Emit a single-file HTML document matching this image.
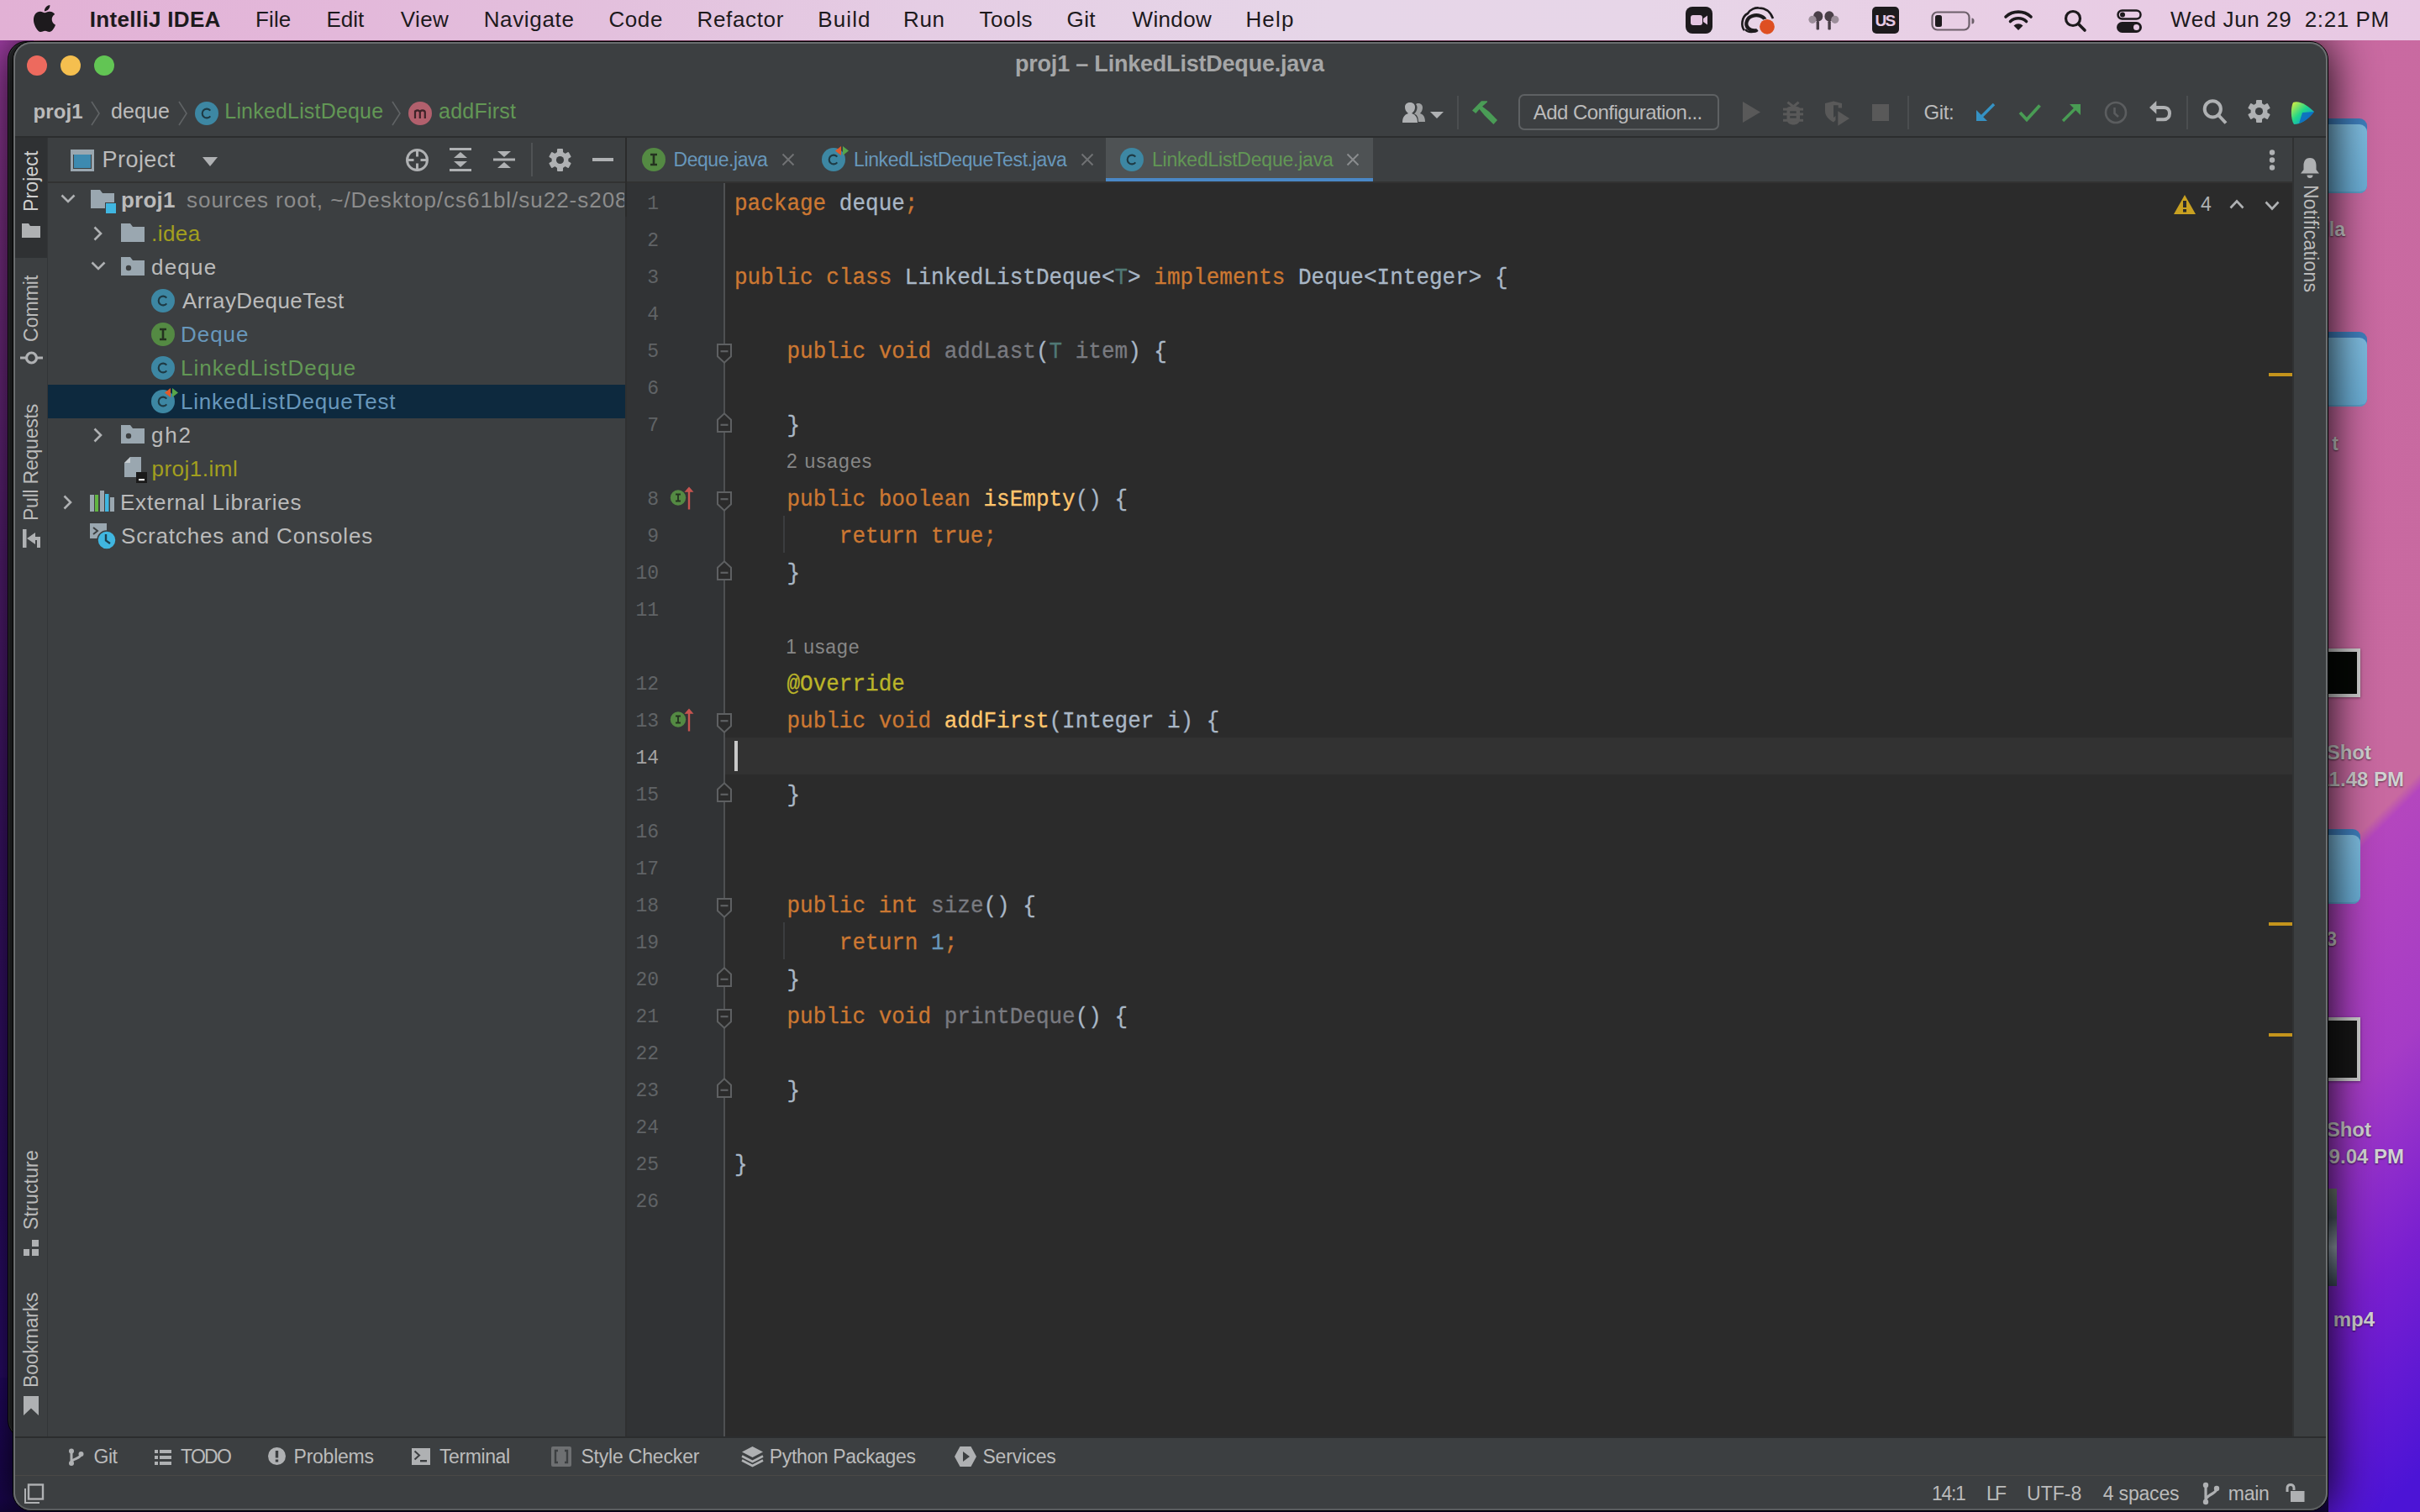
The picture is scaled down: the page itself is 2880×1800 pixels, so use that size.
<!DOCTYPE html>
<html><head><meta charset="utf-8">
<style>
*{margin:0;padding:0;box-sizing:border-box}
html,body{width:2880px;height:1800px;overflow:hidden;background:#5a1ad0}
body{position:relative;font-family:"Liberation Sans",sans-serif;color:#bbbbbb}
.a{position:absolute}
.t{position:absolute;white-space:pre;line-height:1}
svg{overflow:visible}
</style></head><body>
<div class="a" style="left:0;top:0;width:2880px;height:1800px;background:linear-gradient(135deg,#cc6ca4 0%,#c869a0 81.2%,#b446be 81.6%,#a63cc6 87.6%,#7a1fd0 93%,#4c14d6 99%)"></div>
<div class="a" style="left:0;top:48px;width:40px;height:1752px;background:linear-gradient(180deg,#a23fa6 0%,#83328d 12%,#5a2079 35%,#3e146e 55%,#2e0d6c 78%,#2a0b74 100%)"></div>
<div class="a" style="left:0;top:1640px;width:2771px;height:160px;background:linear-gradient(180deg,#26096c,#1a0650 90%,#14053c)"></div>
<div class="a" style="left:2760px;top:141px;width:57px;height:89px;border-radius:9px;background:#3f7fbd"></div>
<div class="a" style="left:2760px;top:148px;width:57px;height:82px;border-radius:9px;background:linear-gradient(180deg,#7fbde0,#6aaed6);box-shadow:inset 0 -8px 0 -6px #5b9fc8"></div>
<div class="a" style="left:2760px;top:395px;width:57px;height:89px;border-radius:9px;background:#3f7fbd"></div>
<div class="a" style="left:2760px;top:402px;width:57px;height:82px;border-radius:9px;background:linear-gradient(180deg,#7fbde0,#6aaed6);box-shadow:inset 0 -8px 0 -6px #5b9fc8"></div>
<div class="a" style="left:2740px;top:987px;width:69px;height:89px;border-radius:9px;background:#3f7fbd"></div>
<div class="a" style="left:2740px;top:994px;width:69px;height:82px;border-radius:9px;background:linear-gradient(180deg,#7fbde0,#6aaed6);box-shadow:inset 0 -8px 0 -6px #5b9fc8"></div>
<div class="a" style="left:2740px;top:772px;width:69px;height:58px;background:#d6d6d6;border:4px solid #cfcfcf;box-shadow:0 1px 3px rgba(0,0,0,.4)"><div style="width:100%;height:100%;background:#050805"></div></div>
<div class="a" style="left:2740px;top:1211px;width:69px;height:76px;background:#d6d6d6;border:4px solid #cfcfcf;box-shadow:0 1px 3px rgba(0,0,0,.4)"><div style="width:100%;height:100%;background:#161616"></div></div>
<div class="a" style="left:2740px;top:1415px;width:41px;height:116px;background:linear-gradient(180deg,#6f7a70,#4e5a66 30%,#9aa6b2 60%,#6a7888 80%,#3e4a5a)"></div>
<div class="t" style="left:2491px;top:262.1px;width:300px;text-align:right;font-size:23px;font-weight:700;color:#d2d2d2;text-shadow:0 1px 2px rgba(0,0,0,.6)">Umbrella</div>
<div class="t" style="left:2483px;top:517.0px;width:300px;text-align:right;font-size:23px;font-weight:700;color:#d2d2d2;text-shadow:0 1px 2px rgba(0,0,0,.6)">cs61bl  t</div>
<div class="t" style="left:2522px;top:883.6px;width:300px;text-align:right;font-size:24px;font-weight:700;color:#d2d2d2;text-shadow:0 1px 2px rgba(0,0,0,.6)">Screen Shot</div>
<div class="t" style="left:2561px;top:915.6px;width:300px;text-align:right;font-size:24px;font-weight:700;color:#d2d2d2;text-shadow:0 1px 2px rgba(0,0,0,.6)">2022-06-29 at 11.48 PM</div>
<div class="t" style="left:2481px;top:1106.5px;width:300px;text-align:right;font-size:23px;font-weight:700;color:#d2d2d2;text-shadow:0 1px 2px rgba(0,0,0,.6)">proj3</div>
<div class="t" style="left:2522px;top:1332.6px;width:300px;text-align:right;font-size:24px;font-weight:700;color:#d2d2d2;text-shadow:0 1px 2px rgba(0,0,0,.6)">Screen Shot</div>
<div class="t" style="left:2561px;top:1364.6px;width:300px;text-align:right;font-size:24px;font-weight:700;color:#d2d2d2;text-shadow:0 1px 2px rgba(0,0,0,.6)">2022-06-28 at 9.04 PM</div>
<div class="t" style="left:2526px;top:1558.6px;width:300px;text-align:right;font-size:24px;font-weight:700;color:#d2d2d2;text-shadow:0 1px 2px rgba(0,0,0,.6)">video mp4</div>
<div class="a" style="left:9px;top:49px;width:400px;height:1664px;border-radius:22px;background:#2c2e30;border:1px solid #050505;box-shadow:inset 1px 0 0 #4a4d4f"></div>
<div class="a" style="left:15px;top:49px;width:2756px;height:1750px;border-radius:22px;background:#3c3f41;border:1px solid #000;box-shadow:0 0 55px rgba(0,0,0,1)"></div>
<div class="a" style="left:0;top:0;width:2880px;height:48px;background:linear-gradient(90deg,#e2b1d5 0%,#e3b8da 14%,#e3c0dd 25%,#e5cde4 38%,#e6d6e8 55%,#e7d6e8 68%,#e8cfe5 80%,#e8c8e3 100%)"></div>
<div class="a" style="left:2006px;top:8px;width:32px;height:32px;background:#1d1a1d;border-radius:8px"></div>
<div class="a" style="left:2228px;top:8px;width:32px;height:32px;background:#1d1a1d;border-radius:5px"></div>
<div class="a" style="left:18px;top:162px;width:2750px;height:2px;background:#2b2d2e;"></div>
<div class="a" style="left:18px;top:164px;width:38px;height:1546px;background:#3c3f41;"></div>
<div class="a" style="left:18px;top:164px;width:38px;height:143px;background:#2f3133;"></div>
<div class="a" style="left:56px;top:164px;width:1px;height:1546px;background:#333537;"></div>
<div class="a" style="left:57px;top:216px;width:687px;height:2px;background:#323232;"></div>
<div class="a" style="left:57px;top:458px;width:687px;height:40px;background:#0d293e;"></div>
<div class="a" style="left:744px;top:164px;width:2px;height:54px;background:#2b2b2b;"></div>
<div class="a" style="left:744px;top:218px;width:2px;height:1492px;background:#2f3031;"></div>
<div class="a" style="left:1316px;top:164px;width:318px;height:52px;background:#4e5254;"></div>
<div class="a" style="left:1316px;top:212px;width:318px;height:4px;background:#4a88c7;"></div>
<div class="a" style="left:746px;top:216px;width:1982px;height:2px;background:#323232;"></div>
<div class="a" style="left:746px;top:218px;width:115px;height:1492px;background:#313335;"></div>
<div class="a" style="left:863px;top:218px;width:1865px;height:1492px;background:#2b2b2b;"></div>
<div class="a" style="left:863px;top:878px;width:1865px;height:44px;background:#323232;"></div>
<div class="a" style="left:861px;top:218px;width:2px;height:1492px;background:#4e5052;"></div>
<div class="a" style="left:2728px;top:164px;width:2px;height:1546px;background:#303233;"></div>
<div class="a" style="left:18px;top:1710px;width:2750px;height:2px;background:#2b2d2e;"></div>
<div class="a" style="left:18px;top:1756px;width:2750px;height:1px;background:#4a4946;"></div>
<div class="a" style="left:1734px;top:114px;width:2px;height:40px;background:#4b4e50;"></div>
<div class="a" style="left:1807px;top:112px;width:239px;height:43px;border:2px solid #5e6163;border-radius:7px"></div>
<div class="a" style="left:2228px;top:124px;width:20px;height:20px;background:#595959;"></div>
<div class="a" style="left:2270px;top:114px;width:2px;height:40px;background:#4b4e50;"></div>
<div class="a" style="left:2602px;top:114px;width:2px;height:40px;background:#4b4e50;"></div>
<div class="a" style="left:632px;top:170px;width:2px;height:40px;background:#505355;"></div>
<div class="a" style="left:705px;top:188px;width:25px;height:4px;background:#afb1b3;"></div>
<div class="a" style="left:744px;top:218px;width:2px;height:40px;background:#2b2b2b;"></div>
<div class="a" style="left:746px;top:218px;width:20px;height:40px;background:#313335;"></div>
<div class="t" style="left:698px;width:86px;text-align:right;top:232.3px;font-family:'Liberation Mono';font-size:23px;color:#606366">1</div>
<div class="t" style="left:698px;width:86px;text-align:right;top:276.3px;font-family:'Liberation Mono';font-size:23px;color:#606366">2</div>
<div class="t" style="left:698px;width:86px;text-align:right;top:320.3px;font-family:'Liberation Mono';font-size:23px;color:#606366">3</div>
<div class="t" style="left:698px;width:86px;text-align:right;top:364.3px;font-family:'Liberation Mono';font-size:23px;color:#606366">4</div>
<div class="t" style="left:698px;width:86px;text-align:right;top:408.3px;font-family:'Liberation Mono';font-size:23px;color:#606366">5</div>
<div class="t" style="left:698px;width:86px;text-align:right;top:452.3px;font-family:'Liberation Mono';font-size:23px;color:#606366">6</div>
<div class="t" style="left:698px;width:86px;text-align:right;top:496.3px;font-family:'Liberation Mono';font-size:23px;color:#606366">7</div>
<div class="t" style="left:698px;width:86px;text-align:right;top:584.3px;font-family:'Liberation Mono';font-size:23px;color:#606366">8</div>
<div class="t" style="left:698px;width:86px;text-align:right;top:628.3px;font-family:'Liberation Mono';font-size:23px;color:#606366">9</div>
<div class="t" style="left:698px;width:86px;text-align:right;top:672.3px;font-family:'Liberation Mono';font-size:23px;color:#606366">10</div>
<div class="t" style="left:698px;width:86px;text-align:right;top:716.3px;font-family:'Liberation Mono';font-size:23px;color:#606366">11</div>
<div class="t" style="left:698px;width:86px;text-align:right;top:804.3px;font-family:'Liberation Mono';font-size:23px;color:#606366">12</div>
<div class="t" style="left:698px;width:86px;text-align:right;top:848.3px;font-family:'Liberation Mono';font-size:23px;color:#606366">13</div>
<div class="t" style="left:698px;width:86px;text-align:right;top:892.3px;font-family:'Liberation Mono';font-size:23px;color:#a4a3a3">14</div>
<div class="t" style="left:698px;width:86px;text-align:right;top:936.3px;font-family:'Liberation Mono';font-size:23px;color:#606366">15</div>
<div class="t" style="left:698px;width:86px;text-align:right;top:980.3px;font-family:'Liberation Mono';font-size:23px;color:#606366">16</div>
<div class="t" style="left:698px;width:86px;text-align:right;top:1024.3px;font-family:'Liberation Mono';font-size:23px;color:#606366">17</div>
<div class="t" style="left:698px;width:86px;text-align:right;top:1068.3px;font-family:'Liberation Mono';font-size:23px;color:#606366">18</div>
<div class="t" style="left:698px;width:86px;text-align:right;top:1112.3px;font-family:'Liberation Mono';font-size:23px;color:#606366">19</div>
<div class="t" style="left:698px;width:86px;text-align:right;top:1156.3px;font-family:'Liberation Mono';font-size:23px;color:#606366">20</div>
<div class="t" style="left:698px;width:86px;text-align:right;top:1200.3px;font-family:'Liberation Mono';font-size:23px;color:#606366">21</div>
<div class="t" style="left:698px;width:86px;text-align:right;top:1244.3px;font-family:'Liberation Mono';font-size:23px;color:#606366">22</div>
<div class="t" style="left:698px;width:86px;text-align:right;top:1288.3px;font-family:'Liberation Mono';font-size:23px;color:#606366">23</div>
<div class="t" style="left:698px;width:86px;text-align:right;top:1332.3px;font-family:'Liberation Mono';font-size:23px;color:#606366">24</div>
<div class="t" style="left:698px;width:86px;text-align:right;top:1376.3px;font-family:'Liberation Mono';font-size:23px;color:#606366">25</div>
<div class="t" style="left:698px;width:86px;text-align:right;top:1420.3px;font-family:'Liberation Mono';font-size:23px;color:#606366">26</div>
<div class="t code" style="left:874px;top:230.0px;font-family:'Liberation Mono';font-size:26px;transform:scaleY(1.09);transform-origin:0 19.76px;-webkit-text-stroke:0.3px"><span style="color:#cc7832">package</span><span style="color:#a9b7c6"> deque</span><span style="color:#cc7832">;</span></div>
<div class="t code" style="left:874px;top:318.0px;font-family:'Liberation Mono';font-size:26px;transform:scaleY(1.09);transform-origin:0 19.76px;-webkit-text-stroke:0.3px"><span style="color:#cc7832">public</span><span style="color:#a9b7c6"> </span><span style="color:#cc7832">class</span><span style="color:#a9b7c6"> LinkedListDeque&lt;</span><span style="color:#507874">T</span><span style="color:#a9b7c6">&gt; </span><span style="color:#cc7832">implements</span><span style="color:#a9b7c6"> Deque&lt;Integer&gt; {</span></div>
<div class="t code" style="left:874px;top:406.0px;font-family:'Liberation Mono';font-size:26px;transform:scaleY(1.09);transform-origin:0 19.76px;-webkit-text-stroke:0.3px"><span style="color:#a9b7c6">    </span><span style="color:#cc7832">public</span><span style="color:#a9b7c6"> </span><span style="color:#cc7832">void</span><span style="color:#a9b7c6"> </span><span style="color:#797a80">addLast</span><span style="color:#a9b7c6">(</span><span style="color:#507874">T</span><span style="color:#a9b7c6"> </span><span style="color:#797a80">item</span><span style="color:#a9b7c6">) {</span></div>
<div class="t code" style="left:874px;top:494.0px;font-family:'Liberation Mono';font-size:26px;transform:scaleY(1.09);transform-origin:0 19.76px;-webkit-text-stroke:0.3px"><span style="color:#a9b7c6">    }</span></div>
<div class="t code" style="left:874px;top:582.0px;font-family:'Liberation Mono';font-size:26px;transform:scaleY(1.09);transform-origin:0 19.76px;-webkit-text-stroke:0.3px"><span style="color:#a9b7c6">    </span><span style="color:#cc7832">public</span><span style="color:#a9b7c6"> </span><span style="color:#cc7832">boolean</span><span style="color:#a9b7c6"> </span><span style="color:#ffc66d">isEmpty</span><span style="color:#a9b7c6">() {</span></div>
<div class="t code" style="left:874px;top:626.0px;font-family:'Liberation Mono';font-size:26px;transform:scaleY(1.09);transform-origin:0 19.76px;-webkit-text-stroke:0.3px"><span style="color:#a9b7c6">        </span><span style="color:#cc7832">return</span><span style="color:#a9b7c6"> </span><span style="color:#cc7832">true</span><span style="color:#cc7832">;</span></div>
<div class="t code" style="left:874px;top:670.0px;font-family:'Liberation Mono';font-size:26px;transform:scaleY(1.09);transform-origin:0 19.76px;-webkit-text-stroke:0.3px"><span style="color:#a9b7c6">    }</span></div>
<div class="t code" style="left:874px;top:802.0px;font-family:'Liberation Mono';font-size:26px;transform:scaleY(1.09);transform-origin:0 19.76px;-webkit-text-stroke:0.3px"><span style="color:#a9b7c6">    </span><span style="color:#bbb529">@Override</span></div>
<div class="t code" style="left:874px;top:846.0px;font-family:'Liberation Mono';font-size:26px;transform:scaleY(1.09);transform-origin:0 19.76px;-webkit-text-stroke:0.3px"><span style="color:#a9b7c6">    </span><span style="color:#cc7832">public</span><span style="color:#a9b7c6"> </span><span style="color:#cc7832">void</span><span style="color:#a9b7c6"> </span><span style="color:#ffc66d">addFirst</span><span style="color:#a9b7c6">(Integer i) {</span></div>
<div class="t code" style="left:874px;top:934.0px;font-family:'Liberation Mono';font-size:26px;transform:scaleY(1.09);transform-origin:0 19.76px;-webkit-text-stroke:0.3px"><span style="color:#a9b7c6">    }</span></div>
<div class="t code" style="left:874px;top:1066.0px;font-family:'Liberation Mono';font-size:26px;transform:scaleY(1.09);transform-origin:0 19.76px;-webkit-text-stroke:0.3px"><span style="color:#a9b7c6">    </span><span style="color:#cc7832">public</span><span style="color:#a9b7c6"> </span><span style="color:#cc7832">int</span><span style="color:#a9b7c6"> </span><span style="color:#797a80">size</span><span style="color:#a9b7c6">() {</span></div>
<div class="t code" style="left:874px;top:1110.0px;font-family:'Liberation Mono';font-size:26px;transform:scaleY(1.09);transform-origin:0 19.76px;-webkit-text-stroke:0.3px"><span style="color:#a9b7c6">        </span><span style="color:#cc7832">return</span><span style="color:#a9b7c6"> </span><span style="color:#6897bb">1</span><span style="color:#cc7832">;</span></div>
<div class="t code" style="left:874px;top:1154.0px;font-family:'Liberation Mono';font-size:26px;transform:scaleY(1.09);transform-origin:0 19.76px;-webkit-text-stroke:0.3px"><span style="color:#a9b7c6">    }</span></div>
<div class="t code" style="left:874px;top:1198.0px;font-family:'Liberation Mono';font-size:26px;transform:scaleY(1.09);transform-origin:0 19.76px;-webkit-text-stroke:0.3px"><span style="color:#a9b7c6">    </span><span style="color:#cc7832">public</span><span style="color:#a9b7c6"> </span><span style="color:#cc7832">void</span><span style="color:#a9b7c6"> </span><span style="color:#797a80">printDeque</span><span style="color:#a9b7c6">() {</span></div>
<div class="t code" style="left:874px;top:1286.0px;font-family:'Liberation Mono';font-size:26px;transform:scaleY(1.09);transform-origin:0 19.76px;-webkit-text-stroke:0.3px"><span style="color:#a9b7c6">    }</span></div>
<div class="t code" style="left:874px;top:1374.0px;font-family:'Liberation Mono';font-size:26px;transform:scaleY(1.09);transform-origin:0 19.76px;-webkit-text-stroke:0.3px"><span style="color:#a9b7c6">}</span></div>
<div class="a" style="left:932px;top:614px;width:2px;height:44px;background:#3b3d3f;"></div>
<div class="a" style="left:932px;top:1098px;width:2px;height:44px;background:#3b3d3f;"></div>
<div class="a" style="left:874px;top:882px;width:4px;height:36px;background:#c8c8c8;"></div>
<div class="a" style="left:2700px;top:444px;width:28px;height:4px;background:#c4941c;"></div>
<div class="a" style="left:2700px;top:1098px;width:28px;height:4px;background:#c4941c;"></div>
<div class="a" style="left:2700px;top:1230px;width:28px;height:4px;background:#c4941c;"></div>
<svg class="a" style="left:36.7px;top:6px;" width="32" height="32" viewBox="0 0 24 24"><path fill="#1d1a1d" d="M12.152 6.896c-.948 0-2.415-1.078-3.96-1.04-2.04.027-3.91 1.183-4.961 3.014-2.117 3.675-.546 9.103 1.519 12.09 1.013 1.454 2.208 3.09 3.792 3.039 1.52-.065 2.09-.987 3.935-.987 1.831 0 2.35.987 3.96.948 1.637-.026 2.676-1.48 3.676-2.948 1.156-1.688 1.636-3.325 1.662-3.415-.039-.013-3.182-1.221-3.22-4.857-.026-3.04 2.48-4.494 2.597-4.559-1.429-2.09-3.623-2.324-4.39-2.376-2-.156-3.675 1.09-4.61 1.09zM15.53 3.83c.843-1.012 1.4-2.427 1.245-3.83-1.207.052-2.662.805-3.532 1.818-.78.896-1.454 2.338-1.273 3.714 1.338.104 2.715-.688 3.559-1.701"/></svg>
<svg class="a" style="left:2006px;top:8px;" width="32" height="32" viewBox="0 0 32 32"><rect x="6" y="10" width="14" height="12" rx="3" fill="#e4c5e0"/><path d="M21 14 L26 10.5 V21.5 L21 18Z" fill="#e4c5e0"/></svg>
<svg class="a" style="left:2071px;top:8px;" width="44" height="36" viewBox="0 0 44 36"><path d="M5 28 C1 24 1 12 9 8 C12 3 18 1 22 1.5 C30 1.5 36 6 39 14" fill="none" stroke="#1d1a1d" stroke-width="2.6"/><path d="M20 28 C12 30 5 24 8 17 C10 11 18 9 24 11 C27 12 29 14 30 16" fill="none" stroke="#1d1a1d" stroke-width="4.2"/><path d="M6 27 C9 31 16 31 21 28" fill="none" stroke="#1d1a1d" stroke-width="2.4"/><circle cx="32" cy="23.8" r="9.5" fill="#e8dbe8"/><circle cx="32" cy="23.8" r="8.9" fill="#de4f22"/></svg>
<svg class="a" style="left:2152px;top:12px;" width="38" height="26" viewBox="0 0 38 26"><ellipse cx="11.7" cy="7.4" rx="5.6" ry="6.2" fill="#4a3f48"/><circle cx="5" cy="11.3" r="4.6" fill="#9c8e9a"/><rect x="9.6" y="13" width="3.4" height="10.5" rx="1.2" fill="#4a3f48"/><ellipse cx="25" cy="7.4" rx="5.6" ry="6.2" fill="#4a3f48"/><circle cx="31.8" cy="11.3" r="4.6" fill="#9c8e9a"/><rect x="23.4" y="13" width="3.4" height="10.5" rx="1.2" fill="#4a3f48"/></svg>
<svg class="a" style="left:2298px;top:13px;" width="52" height="24" viewBox="0 0 52 24"><rect x="1.5" y="1.5" width="44" height="21" rx="6" fill="none" stroke="#6c5f6a" stroke-width="2.2"/><rect x="5" y="5" width="8" height="14" rx="2.5" fill="#1d1a1d"/><path d="M48.5 8.5 a3 3.5 0 0 1 0 7z" fill="#6c5f6a"/></svg>
<svg class="a" style="left:2385px;top:10px;" width="34" height="28" viewBox="0 0 34 28"><path d="M2 10 A22 22 0 0 1 32 10" fill="none" stroke="#1d1a1d" stroke-width="3.6" stroke-linecap="round"/><path d="M7.5 15.5 A14 14 0 0 1 26.5 15.5" fill="none" stroke="#1d1a1d" stroke-width="3.6" stroke-linecap="round"/><path d="M17 26 L11.5 20.5 A8 8 0 0 1 22.5 20.5Z" fill="#1d1a1d"/></svg>
<svg class="a" style="left:2456px;top:11px;" width="28" height="28" viewBox="0 0 28 28"><circle cx="11" cy="11" r="8.5" fill="none" stroke="#1d1a1d" stroke-width="3.2"/><path d="M17.5 17.5 L25 25" stroke="#1d1a1d" stroke-width="3.6" stroke-linecap="round"/></svg>
<svg class="a" style="left:2519px;top:11px;" width="30" height="28" viewBox="0 0 30 28"><rect x="1.5" y="1.5" width="27" height="10" rx="5" fill="none" stroke="#1d1a1d" stroke-width="2.5"/><circle cx="7" cy="6.5" r="3" fill="#1d1a1d"/><rect x="0" y="15" width="30" height="13" rx="6.5" fill="#1d1a1d"/><circle cx="23.5" cy="21.5" r="3.5" fill="#e6c9e3"/></svg>
<svg class="a" style="left:32px;top:66px;" width="24" height="24" viewBox="0 0 24 24"><circle cx="12" cy="12" r="12" fill="#ed6a5e"/></svg>
<svg class="a" style="left:72px;top:66px;" width="24" height="24" viewBox="0 0 24 24"><circle cx="12" cy="12" r="12" fill="#f5bf4f"/></svg>
<svg class="a" style="left:112px;top:66px;" width="24" height="24" viewBox="0 0 24 24"><circle cx="12" cy="12" r="12" fill="#62c554"/></svg>
<svg class="a" style="left:108px;top:120px;" width="11" height="30" viewBox="0 0 11 30"><path d="M1 1 L10 15 L1 29" fill="none" stroke="#606365" stroke-width="1.6"/></svg>
<svg class="a" style="left:212px;top:120px;" width="11" height="30" viewBox="0 0 11 30"><path d="M1 1 L10 15 L1 29" fill="none" stroke="#606365" stroke-width="1.6"/></svg>
<svg class="a" style="left:465.5px;top:120px;" width="11" height="30" viewBox="0 0 11 30"><path d="M1 1 L10 15 L1 29" fill="none" stroke="#606365" stroke-width="1.6"/></svg>
<svg class="a" style="left:232px;top:120.5px;" width="28" height="28" viewBox="0 0 28 28"><circle cx="14" cy="14" r="14" fill="#3d87a3"/><path d="M18.3 10.6 A5.4 5.4 0 1 0 18.3 17.4" fill="none" stroke="#1e3a44" stroke-width="2.1"/></svg>
<svg class="a" style="left:486px;top:120.5px;" width="28" height="28" viewBox="0 0 28 28"><circle cx="14" cy="14" r="14" fill="#b2606d"/><path d="M8 20 V10.5 M8 13 C8 9.5 13.8 9.5 13.8 13 V20 M13.8 13 C13.8 9.5 19.8 9.5 19.8 13 V20" fill="none" stroke="#3e2328" stroke-width="2.2"/></svg>
<svg class="a" style="left:1667px;top:121px;" width="32" height="26" viewBox="0 0 32 26"><path d="M2 25 C2 17 6 15 9 14 C6 12 5 9 5 6.5 C5 2.5 8 1 11 1 C14 1 17 2.5 17 6.5 C17 9 16 12 13 14 C16 15 20 17 20 25Z" fill="#afb1b3"/><path d="M20 24 H29 C29 17 26 15 23 14 C25 12 26 9.5 26 7 C26 3.5 23.5 2 21 2 C19.5 2 18.5 2.5 18 3 C19 4.5 19.5 5.5 19.5 7 C19.5 10 18 13 16 14.5 C19 15.5 21 18 21 24Z" fill="#afb1b3" opacity=".85"/></svg>
<svg class="a" style="left:1702px;top:133px;" width="16" height="8" viewBox="0 0 16 8"><path d="M0 0 H16 L8 8Z" fill="#afb1b3"/></svg>
<svg class="a" style="left:1751px;top:120px;" width="32" height="29" viewBox="0 0 32 29"><path d="M1 11.4 L12 0.2 H19 V1.6 L13.1 6.8 L21.2 13.1 L31 23 L26.4 27.9 L16 17.8 L9.6 10 L5.3 14.9Z" fill="#4a9c56"/></svg>
<svg class="a" style="left:2074px;top:121px;" width="21" height="25" viewBox="0 0 21 25"><path d="M0 0 L21 12.5 L0 25Z" fill="#595959"/></svg>
<svg class="a" style="left:2121px;top:119px;" width="26" height="30" viewBox="0 0 26 30"><path d="M6.4 2.6 L13.3 8 L19.6 2.6" fill="none" stroke="#595959" stroke-width="3"/><path d="M5.5 10 C5.5 6.5 21 6.5 21 10 V23 C21 27.5 17 29.5 13.3 29.5 C9.5 29.5 5.5 27.5 5.5 23Z" fill="#595959"/><rect x="1" y="9.6" width="24" height="3" fill="#595959"/><rect x="1" y="15.4" width="24" height="3" fill="#595959"/><rect x="1" y="22.8" width="24" height="3" fill="#595959"/><rect x="9.2" y="13.3" width="7.5" height="2.5" fill="#3c3f41"/><rect x="9.2" y="19.1" width="7.5" height="2.5" fill="#3c3f41"/></svg>
<svg class="a" style="left:2172px;top:118px;" width="30" height="32" viewBox="0 0 30 32"><path d="M0 5 L10 2.5 L20 5 V10.5 H15.7 V7.3 H10 V22 L12.5 20 V25 L10 27.5 C4 24 0 20 0 14Z" fill="#595959"/><path d="M15.3 14.3 L29 23 L15.3 31.7Z" fill="#595959"/></svg>
<svg class="a" style="left:2351px;top:123px;" width="23" height="22" viewBox="0 0 23 22"><path d="M22 1 L6 17" stroke="#3592c4" stroke-width="3.4"/><path d="M1 8 V21 H14Z" fill="#3592c4"/></svg>
<svg class="a" style="left:2402px;top:123px;" width="27" height="22" viewBox="0 0 27 22"><path d="M2 11 L10 19.5 L25.5 2.5" fill="none" stroke="#499c54" stroke-width="3.8"/></svg>
<svg class="a" style="left:2454px;top:123px;" width="23" height="22" viewBox="0 0 23 22"><path d="M1 21 L17 5" stroke="#499c54" stroke-width="3.4"/><path d="M22 1 V14 L9 1Z" fill="#499c54"/></svg>
<svg class="a" style="left:2504px;top:120px;" width="28" height="28" viewBox="0 0 28 28"><circle cx="14" cy="14" r="12" fill="none" stroke="#5b5d5f" stroke-width="2.6"/><path d="M12.5 8 V15 L17 19" fill="none" stroke="#5b5d5f" stroke-width="2.6"/></svg>
<svg class="a" style="left:2558px;top:120px;" width="27" height="27" viewBox="0 0 27 27"><path d="M0 8 L8.3 0 V15.8Z" fill="#afb1b3"/><path d="M7 7.9 H17 C22 7.9 24 11.2 24 15 C24 19 21.5 22.2 17 22.2 H8.2" fill="none" stroke="#afb1b3" stroke-width="4"/></svg>
<svg class="a" style="left:2621px;top:120px;" width="30" height="29" viewBox="0 0 30 29"><circle cx="12.3" cy="9.8" r="9.6" fill="none" stroke="#afb1b3" stroke-width="4"/><path d="M19.5 17.5 L28 26.5" stroke="#afb1b3" stroke-width="4"/></svg>
<svg class="a" style="left:2675px;top:119px;" width="27" height="27" viewBox="0 0 27 27"><g transform="translate(13.5,13.5) scale(1.0384615384615385)"><rect x="-3.4" y="-13" width="6.8" height="7" rx="1" transform="rotate(0)" fill="#afb1b3"/><rect x="-3.4" y="-13" width="6.8" height="7" rx="1" transform="rotate(60)" fill="#afb1b3"/><rect x="-3.4" y="-13" width="6.8" height="7" rx="1" transform="rotate(120)" fill="#afb1b3"/><rect x="-3.4" y="-13" width="6.8" height="7" rx="1" transform="rotate(180)" fill="#afb1b3"/><rect x="-3.4" y="-13" width="6.8" height="7" rx="1" transform="rotate(240)" fill="#afb1b3"/><rect x="-3.4" y="-13" width="6.8" height="7" rx="1" transform="rotate(300)" fill="#afb1b3"/><circle r="9.6" fill="#afb1b3"/><circle r="4.4" fill="#3c3f41"/></g></svg>
<svg class="a" style="left:2726px;top:120px;" width="29" height="29" viewBox="0 0 29 29"><defs><linearGradient id="cwm" x1="0" y1="0" x2="1" y2="1"><stop offset="0" stop-color="#e6ef3c"/><stop offset=".45" stop-color="#21d789"/><stop offset="1" stop-color="#087cfa"/></linearGradient></defs><path d="M3 2 C10 -1 20 5 28 13 C21 22 12 28 4 28 C0 22 0 8 3 2Z" fill="url(#cwm)"/><path d="M14 14 L28 13 C24 19 18 24 10 27Z" fill="#0b62c4" opacity=".8"/></svg>
<svg class="a" style="left:26px;top:266px;" width="22" height="17" viewBox="0 0 22 17"><path d="M0 0 H8 L10 3 H22 V17 H0Z" fill="#afb1b3"/></svg>
<svg class="a" style="left:24px;top:417px;" width="27" height="18" viewBox="0 0 27 18"><circle cx="13.5" cy="9" r="6" fill="none" stroke="#afb1b3" stroke-width="3.2"/><path d="M0 9 H7.5 M19.5 9 H27" stroke="#afb1b3" stroke-width="3.2"/></svg>
<svg class="a" style="left:27px;top:630px;" width="22" height="22" viewBox="0 0 22 22"><rect x="0" y="0" width="4.5" height="22" fill="#afb1b3"/><path d="M5 11 L15 4 V18Z" fill="#afb1b3"/><path d="M13 9 H21 V22 H17 V13 H13Z" fill="#afb1b3"/></svg>
<svg class="a" style="left:28px;top:1476px;" width="18" height="19" viewBox="0 0 18 19"><rect x="0" y="11" width="7" height="8" fill="#afb1b3"/><rect x="10" y="0" width="8" height="8" fill="#afb1b3"/><rect x="10" y="11" width="8" height="8" fill="#afb1b3"/></svg>
<svg class="a" style="left:28px;top:1662px;" width="18" height="23" viewBox="0 0 18 23"><path d="M0 0 H18 V23 L9 14.5 L0 23Z" fill="#afb1b3"/></svg>
<svg class="a" style="left:84px;top:178px;" width="28" height="26" viewBox="0 0 28 26"><rect x="1.5" y="1.5" width="25" height="23" fill="none" stroke="#9aa7b0" stroke-width="3"/><rect x="4" y="6" width="20" height="16" fill="#3d8ab0"/><rect x="3" y="3" width="22" height="3" fill="#9aa7b0"/></svg>
<svg class="a" style="left:241px;top:187px;" width="18" height="11" viewBox="0 0 18 11"><path d="M0 0 H18 L9 11Z" fill="#afb1b3"/></svg>
<svg class="a" style="left:482px;top:176px;" width="29" height="29" viewBox="0 0 29 29"><circle cx="14.5" cy="14.5" r="12" fill="none" stroke="#afb1b3" stroke-width="3"/><path d="M14.5 2 V10.5 M14.5 18.5 V27 M2 14.5 H10.5 M18.5 14.5 H27" stroke="#afb1b3" stroke-width="3"/></svg>
<svg class="a" style="left:535px;top:176px;" width="26" height="28" viewBox="0 0 26 28"><path d="M0 1.5 H26 M0 26.5 H26" stroke="#afb1b3" stroke-width="3"/><path d="M13 5 L21 12 H5Z M13 23 L21 16 H5Z" fill="#afb1b3"/></svg>
<svg class="a" style="left:587px;top:176px;" width="26" height="28" viewBox="0 0 26 28"><path d="M0 14 H26" stroke="#afb1b3" stroke-width="3"/><path d="M13 11 L21 4 H5Z M13 17 L21 24 H5Z" fill="#afb1b3"/></svg>
<svg class="a" style="left:653px;top:177px;" width="27" height="27" viewBox="0 0 27 27"><g transform="translate(13.5,13.5) scale(1.0384615384615385)"><rect x="-3.4" y="-13" width="6.8" height="7" rx="1" transform="rotate(0)" fill="#afb1b3"/><rect x="-3.4" y="-13" width="6.8" height="7" rx="1" transform="rotate(60)" fill="#afb1b3"/><rect x="-3.4" y="-13" width="6.8" height="7" rx="1" transform="rotate(120)" fill="#afb1b3"/><rect x="-3.4" y="-13" width="6.8" height="7" rx="1" transform="rotate(180)" fill="#afb1b3"/><rect x="-3.4" y="-13" width="6.8" height="7" rx="1" transform="rotate(240)" fill="#afb1b3"/><rect x="-3.4" y="-13" width="6.8" height="7" rx="1" transform="rotate(300)" fill="#afb1b3"/><circle r="9.6" fill="#afb1b3"/><circle r="4.4" fill="#3c3f41"/></g></svg>
<svg class="a" style="left:72px;top:231px;" width="18" height="11" viewBox="0 0 18 11"><path d="M1.5 1.5 L9 9 L16.5 1.5" fill="none" stroke="#afb1b3" stroke-width="2.6"/></svg>
<svg class="a" style="left:108px;top:226px;" width="31" height="29" viewBox="0 0 31 29"><path d="M0 0 H11 L14 4 H28 V22 H0Z" fill="#9aa7b0"/><rect x="17" y="15" width="13" height="13" fill="#3c3f41"/><rect x="18" y="16" width="12" height="12" fill="#40b6e0"/></svg>
<svg class="a" style="left:111px;top:269px;" width="11" height="18" viewBox="0 0 11 18"><path d="M1.5 1.5 L9 9 L1.5 16.5" fill="none" stroke="#afb1b3" stroke-width="2.6"/></svg>
<svg class="a" style="left:144px;top:266px;" width="28" height="22" viewBox="0 0 28 22"><path d="M0 0 H11 L14 4 H28 V22 H0Z" fill="#9aa7b0"/></svg>
<svg class="a" style="left:108px;top:311px;" width="18" height="11" viewBox="0 0 18 11"><path d="M1.5 1.5 L9 9 L16.5 1.5" fill="none" stroke="#afb1b3" stroke-width="2.6"/></svg>
<svg class="a" style="left:144px;top:306px;" width="28" height="22" viewBox="0 0 28 22"><path d="M0 0 H11 L14 4 H28 V22 H0Z" fill="#9aa7b0"/><circle cx="9" cy="13" r="3.2" fill="#3c3f41"/></svg>
<svg class="a" style="left:180px;top:344px;" width="28" height="28" viewBox="0 0 28 28"><circle cx="14" cy="14" r="14" fill="#3d87a3"/><path d="M18.3 10.6 A5.4 5.4 0 1 0 18.3 17.4" fill="none" stroke="#1e3a44" stroke-width="2.1"/></svg>
<svg class="a" style="left:180px;top:384px;" width="28" height="28" viewBox="0 0 28 28"><circle cx="14" cy="14" r="14" fill="#548a43"/><path d="M10 8 H18 M10 20 H18 M14 8 V20" stroke="#243220" stroke-width="2.6"/></svg>
<svg class="a" style="left:180px;top:424px;" width="28" height="28" viewBox="0 0 28 28"><circle cx="14" cy="14" r="14" fill="#3d87a3"/><path d="M18.3 10.6 A5.4 5.4 0 1 0 18.3 17.4" fill="none" stroke="#1e3a44" stroke-width="2.1"/></svg>
<svg class="a" style="left:180px;top:464px;" width="28" height="28" viewBox="0 0 28 28"><circle cx="14" cy="14" r="14" fill="#3d87a3"/><path d="M18.3 10.6 A5.4 5.4 0 1 0 18.3 17.4" fill="none" stroke="#1e3a44" stroke-width="2.1"/></svg>
<svg class="a" style="left:196px;top:462px;" width="16" height="12" viewBox="0 0 16 12"><path d="M7 0 V11 L0 5.5Z" fill="#e0592a"/><path d="M9 0 V11 L16 5.5Z" fill="#57a64a"/></svg>
<svg class="a" style="left:111px;top:509px;" width="11" height="18" viewBox="0 0 11 18"><path d="M1.5 1.5 L9 9 L1.5 16.5" fill="none" stroke="#afb1b3" stroke-width="2.6"/></svg>
<svg class="a" style="left:144px;top:506px;" width="28" height="22" viewBox="0 0 28 22"><path d="M0 0 H11 L14 4 H28 V22 H0Z" fill="#9aa7b0"/><circle cx="9" cy="13" r="3.2" fill="#3c3f41"/></svg>
<svg class="a" style="left:148px;top:544px;" width="28" height="31" viewBox="0 0 28 31"><path d="M7 0 H20 V24 H0 V7Z" fill="#9aa7b0"/><path d="M0 7 H7 V0Z" fill="#3c3f41"/><path d="M0 7 L7 0 V7Z" fill="#c7cdd1"/><rect x="14" y="18" width="13" height="13" fill="#1a1a1a"/><rect x="17" y="26" width="7" height="2.2" fill="#e8e8e8"/></svg>
<svg class="a" style="left:75px;top:589px;" width="11" height="18" viewBox="0 0 11 18"><path d="M1.5 1.5 L9 9 L1.5 16.5" fill="none" stroke="#afb1b3" stroke-width="2.6"/></svg>
<svg class="a" style="left:107px;top:584px;" width="29" height="25" viewBox="0 0 29 25"><rect x="0" y="5" width="5" height="20" fill="#9aa7b0"/><rect x="6" y="5" width="4" height="20" fill="#62b543"/><rect x="12" y="0" width="5" height="25" fill="#9aa7b0"/><rect x="18" y="4" width="4.5" height="21" fill="#40b6e0"/><rect x="24" y="8" width="5" height="17" fill="#9aa7b0"/></svg>
<svg class="a" style="left:107px;top:623px;" width="32" height="32" viewBox="0 0 32 32"><rect x="0" y="0" width="20" height="18" fill="#9aa7b0"/><path d="M4 5 L9 9 L4 13" fill="none" stroke="#3c3f41" stroke-width="2"/><circle cx="20" cy="20" r="11" fill="#40b6e0" stroke="#3c3f41" stroke-width="1.5"/><path d="M19 13 V20.5 L24 24" fill="none" stroke="#1c3f4f" stroke-width="2.4"/></svg>
<svg class="a" style="left:764px;top:176px;" width="28" height="28" viewBox="0 0 28 28"><circle cx="14" cy="14" r="14" fill="#548a43"/><path d="M10 8 H18 M10 20 H18 M14 8 V20" stroke="#243220" stroke-width="2.6"/></svg>
<svg class="a" style="left:930px;top:182px;" width="16" height="16" viewBox="0 0 16 16"><path d="M1.5 1.5 L14.5 14.5 M14.5 1.5 L1.5 14.5" stroke="#707274" stroke-width="2"/></svg>
<svg class="a" style="left:978px;top:176px;" width="28" height="28" viewBox="0 0 28 28"><circle cx="14" cy="14" r="14" fill="#3d87a3"/><path d="M18.3 10.6 A5.4 5.4 0 1 0 18.3 17.4" fill="none" stroke="#1e3a44" stroke-width="2.1"/></svg>
<svg class="a" style="left:994px;top:174px;" width="16" height="12" viewBox="0 0 16 12"><path d="M7 0 V11 L0 5.5Z" fill="#e0592a"/><path d="M9 0 V11 L16 5.5Z" fill="#57a64a"/></svg>
<svg class="a" style="left:1286px;top:182px;" width="16" height="16" viewBox="0 0 16 16"><path d="M1.5 1.5 L14.5 14.5 M14.5 1.5 L1.5 14.5" stroke="#707274" stroke-width="2"/></svg>
<svg class="a" style="left:1333px;top:176px;" width="28" height="28" viewBox="0 0 28 28"><circle cx="14" cy="14" r="14" fill="#3d87a3"/><path d="M18.3 10.6 A5.4 5.4 0 1 0 18.3 17.4" fill="none" stroke="#1e3a44" stroke-width="2.1"/></svg>
<svg class="a" style="left:1602px;top:182px;" width="16" height="16" viewBox="0 0 16 16"><path d="M1.5 1.5 L14.5 14.5 M14.5 1.5 L1.5 14.5" stroke="#8a8c8e" stroke-width="2"/></svg>
<svg class="a" style="left:2700px;top:178px;" width="8" height="24" viewBox="0 0 8 24"><circle cx="4" cy="3.5" r="3.2" fill="#afb1b3"/><circle cx="4" cy="12.5" r="3.2" fill="#afb1b3"/><circle cx="4" cy="21.5" r="3.2" fill="#afb1b3"/></svg>
<svg class="a" style="left:853px;top:409px;" width="18" height="24" viewBox="0 0 18 24"><path d="M1 1 H17 V15.3 L9 22.7 L1 15.3Z" fill="#2b2b2b" stroke="#5e6062" stroke-width="2"/><path d="M4.5 9.2 H13.5" stroke="#5e6062" stroke-width="2.2"/></svg>
<svg class="a" style="left:853px;top:585px;" width="18" height="24" viewBox="0 0 18 24"><path d="M1 1 H17 V15.3 L9 22.7 L1 15.3Z" fill="#2b2b2b" stroke="#5e6062" stroke-width="2"/><path d="M4.5 9.2 H13.5" stroke="#5e6062" stroke-width="2.2"/></svg>
<svg class="a" style="left:853px;top:849px;" width="18" height="24" viewBox="0 0 18 24"><path d="M1 1 H17 V15.3 L9 22.7 L1 15.3Z" fill="#2b2b2b" stroke="#5e6062" stroke-width="2"/><path d="M4.5 9.2 H13.5" stroke="#5e6062" stroke-width="2.2"/></svg>
<svg class="a" style="left:853px;top:1069px;" width="18" height="24" viewBox="0 0 18 24"><path d="M1 1 H17 V15.3 L9 22.7 L1 15.3Z" fill="#2b2b2b" stroke="#5e6062" stroke-width="2"/><path d="M4.5 9.2 H13.5" stroke="#5e6062" stroke-width="2.2"/></svg>
<svg class="a" style="left:853px;top:1201px;" width="18" height="24" viewBox="0 0 18 24"><path d="M1 1 H17 V15.3 L9 22.7 L1 15.3Z" fill="#2b2b2b" stroke="#5e6062" stroke-width="2"/><path d="M4.5 9.2 H13.5" stroke="#5e6062" stroke-width="2.2"/></svg>
<svg class="a" style="left:853px;top:491px;" width="18" height="24" viewBox="0 0 18 24"><path d="M1 23 H17 V8.7 L9 1.3 L1 8.7Z" fill="#2b2b2b" stroke="#5e6062" stroke-width="2"/><path d="M4.5 14.8 H13.5" stroke="#5e6062" stroke-width="2.2"/></svg>
<svg class="a" style="left:853px;top:667px;" width="18" height="24" viewBox="0 0 18 24"><path d="M1 23 H17 V8.7 L9 1.3 L1 8.7Z" fill="#2b2b2b" stroke="#5e6062" stroke-width="2"/><path d="M4.5 14.8 H13.5" stroke="#5e6062" stroke-width="2.2"/></svg>
<svg class="a" style="left:853px;top:931px;" width="18" height="24" viewBox="0 0 18 24"><path d="M1 23 H17 V8.7 L9 1.3 L1 8.7Z" fill="#2b2b2b" stroke="#5e6062" stroke-width="2"/><path d="M4.5 14.8 H13.5" stroke="#5e6062" stroke-width="2.2"/></svg>
<svg class="a" style="left:853px;top:1151px;" width="18" height="24" viewBox="0 0 18 24"><path d="M1 23 H17 V8.7 L9 1.3 L1 8.7Z" fill="#2b2b2b" stroke="#5e6062" stroke-width="2"/><path d="M4.5 14.8 H13.5" stroke="#5e6062" stroke-width="2.2"/></svg>
<svg class="a" style="left:853px;top:1283px;" width="18" height="24" viewBox="0 0 18 24"><path d="M1 23 H17 V8.7 L9 1.3 L1 8.7Z" fill="#2b2b2b" stroke="#5e6062" stroke-width="2"/><path d="M4.5 14.8 H13.5" stroke="#5e6062" stroke-width="2.2"/></svg>
<svg class="a" style="left:797px;top:578px;" width="30" height="30" viewBox="0 0 30 30"><circle cx="10" cy="14.5" r="9.2" fill="#548a43"/><path d="M7 10.5 H13 M7 18.5 H13 M10 10.5 V18.5" stroke="#243220" stroke-width="1.8"/><path d="M23 1.5 L28.5 7.8 H24.2 V28.5 H21.8 V7.8 H17.5Z" fill="#c75450"/></svg>
<svg class="a" style="left:797px;top:842px;" width="30" height="30" viewBox="0 0 30 30"><circle cx="10" cy="14.5" r="9.2" fill="#548a43"/><path d="M7 10.5 H13 M7 18.5 H13 M10 10.5 V18.5" stroke="#243220" stroke-width="1.8"/><path d="M23 1.5 L28.5 7.8 H24.2 V28.5 H21.8 V7.8 H17.5Z" fill="#c75450"/></svg>
<svg class="a" style="left:2587px;top:232px;" width="26" height="23" viewBox="0 0 26 23"><path d="M13 0 L26 23 H0Z" fill="#c9a121"/><rect x="11" y="7" width="4" height="8" fill="#2b2b2b"/><rect x="11" y="17" width="4" height="3.5" fill="#2b2b2b"/></svg>
<svg class="a" style="left:2653px;top:237px;" width="18" height="12" viewBox="0 0 18 12"><path d="M1.5 10.5 L9 2.5 L16.5 10.5" fill="none" stroke="#afb1b3" stroke-width="2.6"/></svg>
<svg class="a" style="left:2695px;top:239px;" width="18" height="12" viewBox="0 0 18 12"><path d="M1.5 1.5 L9 9.5 L16.5 1.5" fill="none" stroke="#afb1b3" stroke-width="2.6"/></svg>
<svg class="a" style="left:2737px;top:187px;" width="24" height="26" viewBox="0 0 24 26"><path d="M12 1 C6 1 4.5 6 4.5 10 V15 L1 19.5 H23 L19.5 15 V10 C19.5 6 18 1 12 1Z" fill="#afb1b3"/><path d="M8.5 21.5 H15.5 C15.5 24 14 25 12 25 C10 25 8.5 24 8.5 21.5Z" fill="#afb1b3"/></svg>
<svg class="a" style="left:81px;top:1724px;" width="19" height="21" viewBox="0 0 19 21"><circle cx="4" cy="3.5" r="3" fill="#afb1b3"/><circle cx="4" cy="18" r="3" fill="#afb1b3"/><circle cx="15.5" cy="7" r="3" fill="#afb1b3"/><path d="M4 4 V18 M15.5 7 C15.5 13 4 12 4 17" fill="none" stroke="#afb1b3" stroke-width="3"/></svg>
<svg class="a" style="left:184px;top:1726px;" width="20" height="18" viewBox="0 0 20 18"><rect x="0" y="0" width="4" height="4" fill="#afb1b3"/><rect x="6" y="0" width="14" height="4" fill="#afb1b3"/><rect x="0" y="7" width="4" height="4" fill="#afb1b3"/><rect x="6" y="7" width="14" height="4" fill="#afb1b3"/><rect x="0" y="14" width="4" height="4" fill="#afb1b3"/><rect x="6" y="14" width="14" height="4" fill="#afb1b3"/></svg>
<svg class="a" style="left:319px;top:1723px;" width="21" height="21" viewBox="0 0 21 21"><circle cx="10.5" cy="10.5" r="10.5" fill="#afb1b3"/><rect x="8.8" y="4" width="3.4" height="8.5" fill="#3c3f41"/><rect x="8.8" y="14.5" width="3.4" height="3" fill="#3c3f41"/></svg>
<svg class="a" style="left:490px;top:1724px;" width="22" height="20" viewBox="0 0 22 20"><rect x="0" y="0" width="22" height="20" fill="#afb1b3"/><path d="M3.5 3.5 L9 8.5 L3.5 13.5" fill="none" stroke="#3c3f41" stroke-width="2"/><rect x="10" y="14" width="8" height="2.4" fill="#3c3f41"/></svg>
<svg class="a" style="left:656px;top:1722px;" width="24" height="24" viewBox="0 0 24 24"><rect x="0" y="0" width="24" height="24" rx="2" fill="#6e7072"/><path d="M8 5 H5 V19 H8 M16 5 H19 V19 H16" fill="none" stroke="#3c3f41" stroke-width="2.4"/></svg>
<svg class="a" style="left:883px;top:1722px;" width="25" height="24" viewBox="0 0 25 24"><path d="M12.5 0 L25 6.5 L12.5 13 L0 6.5Z" fill="#afb1b3"/><path d="M0 11.5 L12.5 18 L25 11.5 M0 16.5 L12.5 23 L25 16.5" fill="none" stroke="#afb1b3" stroke-width="2.6"/></svg>
<svg class="a" style="left:1136px;top:1722px;" width="26" height="24" viewBox="0 0 26 24"><path d="M6.5 0 H19.5 L26 12 L19.5 24 H6.5 L0 12Z" fill="#afb1b3"/><path d="M10 6 L18 12 L10 18Z" fill="#3c3f41"/></svg>
<svg class="a" style="left:28px;top:1766px;" width="25" height="25" viewBox="0 0 25 25"><path d="M2 6 V23 H19" fill="none" stroke="#afb1b3" stroke-width="2"/><rect x="6" y="1.5" width="17" height="17" fill="none" stroke="#afb1b3" stroke-width="2.4"/></svg>
<svg class="a" style="left:2621px;top:1764px;" width="21" height="28" viewBox="0 0 21 28"><circle cx="4" cy="4" r="3.2" fill="#afb1b3"/><circle cx="4" cy="24" r="3.2" fill="#afb1b3"/><circle cx="17" cy="8" r="3.2" fill="#afb1b3"/><path d="M4 4 V24 M17 8 C17 15 4 15 4 22" fill="none" stroke="#afb1b3" stroke-width="3.2"/></svg>
<svg class="a" style="left:2719px;top:1765px;" width="24" height="23" viewBox="0 0 24 23"><path d="M3 11 V6.5 C3 1 11 1 11 6.5 V9" fill="none" stroke="#afb1b3" stroke-width="3"/><rect x="7" y="10" width="16.5" height="13" fill="#afb1b3"/></svg>
<div class="t" style="left:106.8px;top:9.7px;font-family:'Liberation Sans';font-size:26px;font-weight:700;color:#1d1a1d;letter-spacing:0.32px;">IntelliJ IDEA</div>
<div class="t" style="left:304.0px;top:9.7px;font-family:'Liberation Sans';font-size:26px;font-weight:400;color:#1d1a1d;letter-spacing:0.12px;">File</div>
<div class="t" style="left:388.5px;top:9.7px;font-family:'Liberation Sans';font-size:26px;font-weight:400;color:#1d1a1d;letter-spacing:-0.03px;">Edit</div>
<div class="t" style="left:476.8px;top:9.7px;font-family:'Liberation Sans';font-size:26px;font-weight:400;color:#1d1a1d;letter-spacing:0.36px;">View</div>
<div class="t" style="left:575.7px;top:9.7px;font-family:'Liberation Sans';font-size:26px;font-weight:400;color:#1d1a1d;letter-spacing:0.65px;">Navigate</div>
<div class="t" style="left:724.4px;top:9.7px;font-family:'Liberation Sans';font-size:26px;font-weight:400;color:#1d1a1d;letter-spacing:0.60px;">Code</div>
<div class="t" style="left:829.5px;top:9.7px;font-family:'Liberation Sans';font-size:26px;font-weight:400;color:#1d1a1d;letter-spacing:0.66px;">Refactor</div>
<div class="t" style="left:973.3px;top:9.7px;font-family:'Liberation Sans';font-size:26px;font-weight:400;color:#1d1a1d;letter-spacing:1.09px;">Build</div>
<div class="t" style="left:1075.0px;top:9.7px;font-family:'Liberation Sans';font-size:26px;font-weight:400;color:#1d1a1d;letter-spacing:0.68px;">Run</div>
<div class="t" style="left:1165.5px;top:9.7px;font-family:'Liberation Sans';font-size:26px;font-weight:400;color:#1d1a1d;letter-spacing:0.58px;">Tools</div>
<div class="t" style="left:1269.6px;top:9.7px;font-family:'Liberation Sans';font-size:26px;font-weight:400;color:#1d1a1d;letter-spacing:0.35px;">Git</div>
<div class="t" style="left:1347.5px;top:9.7px;font-family:'Liberation Sans';font-size:26px;font-weight:400;color:#1d1a1d;letter-spacing:0.36px;">Window</div>
<div class="t" style="left:1482.4px;top:9.7px;font-family:'Liberation Sans';font-size:26px;font-weight:400;color:#1d1a1d;letter-spacing:1.20px;">Help</div>
<div class="t" style="left:2583.0px;top:9.7px;font-family:'Liberation Sans';font-size:26px;font-weight:400;color:#1d1a1d;letter-spacing:0.59px;">Wed Jun 29  2:21 PM</div>
<div class="t" style="left:2231.5px;top:14.9px;font-family:'Liberation Sans';font-size:19px;font-weight:700;color:#e6c9e3;letter-spacing:-1.72px;">US</div>
<div class="t" style="left:1208.0px;top:63.0px;font-family:'Liberation Sans';font-size:27px;font-weight:700;color:#a5a6a7;letter-spacing:-0.21px;">proj1 – LinkedListDeque.java</div>
<div class="t" style="left:39.4px;top:121.3px;font-family:'Liberation Sans';font-size:24px;font-weight:700;color:#bbbbbb;letter-spacing:0.12px;">proj1</div>
<div class="t" style="left:131.9px;top:120.4px;font-family:'Liberation Sans';font-size:25px;font-weight:400;color:#bbbbbb;letter-spacing:0.12px;">deque</div>
<div class="t" style="left:267.3px;top:120.4px;font-family:'Liberation Sans';font-size:25px;font-weight:400;color:#629755;letter-spacing:0.18px;">LinkedListDeque</div>
<div class="t" style="left:522.0px;top:120.4px;font-family:'Liberation Sans';font-size:25px;font-weight:400;color:#629755;letter-spacing:0.23px;">addFirst</div>
<div class="t" style="left:1824.8px;top:121.8px;font-family:'Liberation Sans';font-size:24px;font-weight:400;color:#bbbbbb;letter-spacing:-0.56px;">Add Configuration...</div>
<div class="t" style="left:2289.5px;top:121.8px;font-family:'Liberation Sans';font-size:24px;font-weight:400;color:#bbbbbb;letter-spacing:-0.39px;">Git:</div>
<div class="t" style="left:25.9px;top:252.0px;font-family:'Liberation Sans';font-size:23px;font-weight:400;color:#d0d0d0;letter-spacing:0.13px;transform-origin:0 0;transform:rotate(-90deg)">Project</div>
<div class="t" style="left:25.9px;top:406.6px;font-family:'Liberation Sans';font-size:23px;font-weight:400;color:#bbbbbb;letter-spacing:0.03px;transform-origin:0 0;transform:rotate(-90deg)">Commit</div>
<div class="t" style="left:25.9px;top:619.7px;font-family:'Liberation Sans';font-size:23px;font-weight:400;color:#bbbbbb;letter-spacing:-0.23px;transform-origin:0 0;transform:rotate(-90deg)">Pull Requests</div>
<div class="t" style="left:25.9px;top:1464.0px;font-family:'Liberation Sans';font-size:23px;font-weight:400;color:#bbbbbb;letter-spacing:0.18px;transform-origin:0 0;transform:rotate(-90deg)">Structure</div>
<div class="t" style="left:25.9px;top:1651.7px;font-family:'Liberation Sans';font-size:23px;font-weight:400;color:#bbbbbb;letter-spacing:-0.19px;transform-origin:0 0;transform:rotate(-90deg)">Bookmarks</div>
<div class="t" style="left:121.6px;top:177.1px;font-family:'Liberation Sans';font-size:27px;font-weight:400;color:#bbbbbb;letter-spacing:0.44px;">Project</div>
<div class="t" style="left:144.0px;top:225.4px;font-family:'Liberation Sans';font-size:26px;font-weight:700;color:#bbbbbb;letter-spacing:0.22px;">proj1</div>
<div class="t" style="left:222.0px;top:225.4px;font-family:'Liberation Sans';font-size:26px;font-weight:400;color:#8c8c8c;letter-spacing:0.98px;width:521px;overflow:hidden">sources root, ~/Desktop/cs61bl/su22-s208</div>
<div class="t" style="left:180.0px;top:265.4px;font-family:'Liberation Sans';font-size:26px;font-weight:400;color:#a39f1e;letter-spacing:0.47px;">.idea</div>
<div class="t" style="left:180.0px;top:305.4px;font-family:'Liberation Sans';font-size:26px;font-weight:400;color:#bbbbbb;letter-spacing:1.22px;">deque</div>
<div class="t" style="left:217.0px;top:345.4px;font-family:'Liberation Sans';font-size:26px;font-weight:400;color:#bbbbbb;letter-spacing:0.45px;">ArrayDequeTest</div>
<div class="t" style="left:215.0px;top:385.4px;font-family:'Liberation Sans';font-size:26px;font-weight:400;color:#6897bb;letter-spacing:0.96px;">Deque</div>
<div class="t" style="left:215.0px;top:425.4px;font-family:'Liberation Sans';font-size:26px;font-weight:400;color:#629755;letter-spacing:1.03px;">LinkedListDeque</div>
<div class="t" style="left:215.0px;top:465.4px;font-family:'Liberation Sans';font-size:26px;font-weight:400;color:#6897bb;letter-spacing:0.78px;">LinkedListDequeTest</div>
<div class="t" style="left:180.0px;top:505.4px;font-family:'Liberation Sans';font-size:26px;font-weight:400;color:#bbbbbb;letter-spacing:1.74px;">gh2</div>
<div class="t" style="left:180.5px;top:545.4px;font-family:'Liberation Sans';font-size:26px;font-weight:400;color:#a39f1e;letter-spacing:0.50px;">proj1.iml</div>
<div class="t" style="left:143.0px;top:585.4px;font-family:'Liberation Sans';font-size:26px;font-weight:400;color:#bbbbbb;letter-spacing:0.78px;">External Libraries</div>
<div class="t" style="left:144.0px;top:625.4px;font-family:'Liberation Sans';font-size:26px;font-weight:400;color:#bbbbbb;letter-spacing:0.83px;">Scratches and Consoles</div>
<div class="t" style="left:801.5px;top:178.8px;font-family:'Liberation Sans';font-size:23px;font-weight:400;color:#6897bb;letter-spacing:-0.45px;">Deque.java</div>
<div class="t" style="left:1016.0px;top:178.8px;font-family:'Liberation Sans';font-size:23px;font-weight:400;color:#6897bb;letter-spacing:-0.36px;">LinkedListDequeTest.java</div>
<div class="t" style="left:1371.0px;top:178.8px;font-family:'Liberation Sans';font-size:23px;font-weight:400;color:#629755;letter-spacing:-0.22px;">LinkedListDeque.java</div>
<div class="t" style="left:936.0px;top:537.9px;font-family:'Liberation Sans';font-size:23px;font-weight:400;color:#878787;letter-spacing:1.14px;">2 usages</div>
<div class="t" style="left:935.3px;top:758.5px;font-family:'Liberation Sans';font-size:23px;font-weight:400;color:#878787;letter-spacing:0.89px;">1 usage</div>
<div class="t" style="left:2619.0px;top:232.4px;font-family:'Liberation Sans';font-size:23px;font-weight:400;color:#afb1b3;letter-spacing:0.00px;">4</div>
<div class="t" style="left:2760.6px;top:220.0px;font-family:'Liberation Sans';font-size:23px;font-weight:400;color:#bbbbbb;letter-spacing:0.23px;transform-origin:0 0;transform:rotate(90deg)">Notifications</div>
<div class="t" style="left:111.6px;top:1722.5px;font-family:'Liberation Sans';font-size:23px;font-weight:400;color:#bbbbbb;letter-spacing:-0.50px;">Git</div>
<div class="t" style="left:215.0px;top:1722.5px;font-family:'Liberation Sans';font-size:23px;font-weight:400;color:#bbbbbb;letter-spacing:-1.71px;">TODO</div>
<div class="t" style="left:349.6px;top:1722.5px;font-family:'Liberation Sans';font-size:23px;font-weight:400;color:#bbbbbb;letter-spacing:-0.26px;">Problems</div>
<div class="t" style="left:523.0px;top:1722.5px;font-family:'Liberation Sans';font-size:23px;font-weight:400;color:#bbbbbb;letter-spacing:-0.40px;">Terminal</div>
<div class="t" style="left:691.4px;top:1722.5px;font-family:'Liberation Sans';font-size:23px;font-weight:400;color:#bbbbbb;letter-spacing:-0.18px;">Style Checker</div>
<div class="t" style="left:915.8px;top:1722.5px;font-family:'Liberation Sans';font-size:23px;font-weight:400;color:#bbbbbb;letter-spacing:-0.35px;">Python Packages</div>
<div class="t" style="left:1169.4px;top:1722.5px;font-family:'Liberation Sans';font-size:23px;font-weight:400;color:#bbbbbb;letter-spacing:-0.11px;">Services</div>
<div class="t" style="left:2299.0px;top:1766.5px;font-family:'Liberation Sans';font-size:23px;font-weight:400;color:#bbbbbb;letter-spacing:-1.32px;">14:1</div>
<div class="t" style="left:2364.0px;top:1766.5px;font-family:'Liberation Sans';font-size:23px;font-weight:400;color:#bbbbbb;letter-spacing:-2.79px;">LF</div>
<div class="t" style="left:2412.0px;top:1766.5px;font-family:'Liberation Sans';font-size:23px;font-weight:400;color:#bbbbbb;letter-spacing:0.03px;">UTF-8</div>
<div class="t" style="left:2502.8px;top:1766.5px;font-family:'Liberation Sans';font-size:23px;font-weight:400;color:#bbbbbb;letter-spacing:-0.19px;">4 spaces</div>
<div class="t" style="left:2651.8px;top:1766.5px;font-family:'Liberation Sans';font-size:23px;font-weight:400;color:#bbbbbb;letter-spacing:-0.29px;">main</div>
<div class="a" style="left:16px;top:50px;width:2754px;height:1748px;border-radius:21px;border:2px solid #6b6e70;border-bottom-color:#5a5d5f;pointer-events:none"></div>
</body></html>
